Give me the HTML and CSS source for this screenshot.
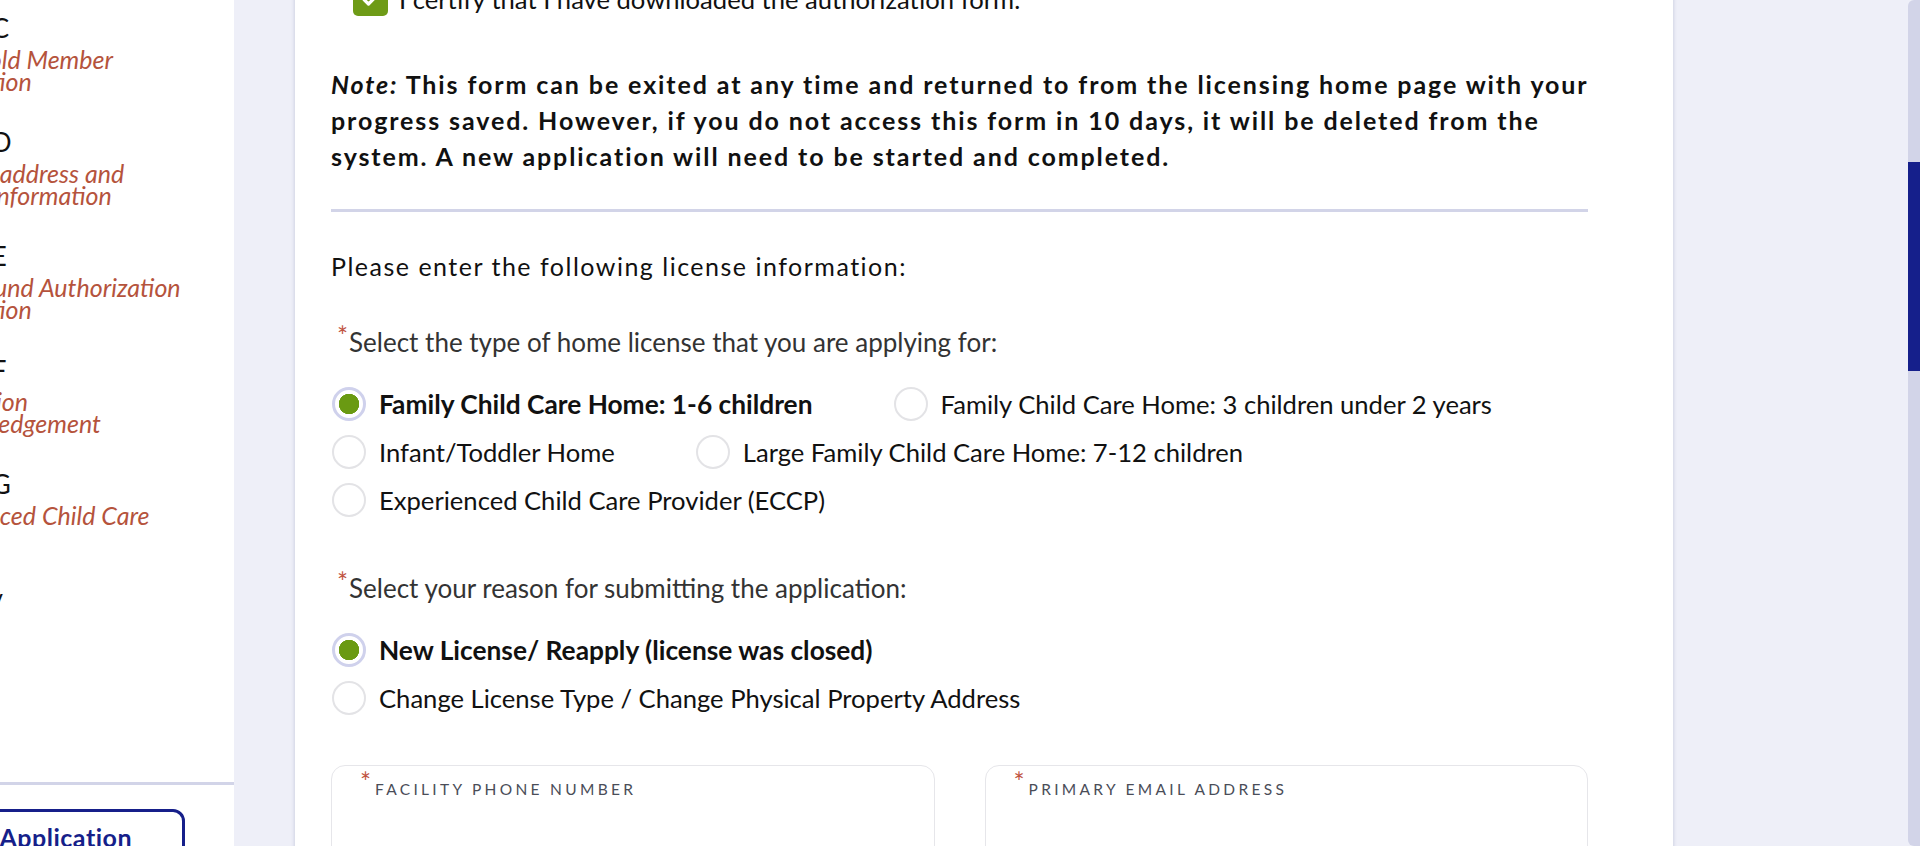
FILE: index.html
```html
<!DOCTYPE html>
<html lang="en">
<head>
<meta charset="utf-8">
<title>License Application</title>
<link rel="stylesheet" href="styles.css">
</head>
<body>
<div class="page">
  <aside class="sidebar">
    <nav class="steps">
      <div class="step">
        <div class="step-title">Step C</div>
        <div class="step-sub">Household Member<br>Information</div>
      </div>
      <div class="step">
        <div class="step-title">Step D</div>
        <div class="step-sub">Physical address and<br>mailing information</div>
      </div>
      <div class="step">
        <div class="step-title">Step E</div>
        <div class="step-sub">Background Authorization<br>Information</div>
      </div>
      <div class="step">
        <div class="step-title">Step F</div>
        <div class="step-sub">Application<br>Acknowledgement</div>
      </div>
      <div class="step">
        <div class="step-title">Step G</div>
        <div class="step-sub">Experienced Child Care</div>
      </div>
      <div class="step">
        <div class="step-title step-title-last">Summary</div>
      </div>
    </nav>
    <div class="side-foot">
      <button class="btn-outline" type="button">Save Application</button>
    </div>
  </aside>

  <main class="main">
    <section class="card">
      <div class="content">
        <div class="certify">
          <span class="checkbox">
            <svg width="22" height="22" viewBox="0 0 22 22"><path d="M4 11.5l4.5 4.5L18 6.5" fill="none" stroke="#fff" stroke-width="3.2" stroke-linecap="round" stroke-linejoin="round"/></svg>
          </span>
          <span>I certify that I have downloaded the authorization form.</span>
        </div>

        <p class="note"><em>Note:</em> This form can be exited at any time and returned to from the licensing home page with your progress saved. However, if you do not access this form in 10 days, it will be deleted from the system. A new application will need to be started and completed.</p>

        <hr class="divider">

        <p class="intro">Please enter the following license information:</p>

        <div class="question">
          <div class="q-label"><span class="req">*</span>Select the type of home license that you are applying for:</div>
          <div class="radios">
            <div class="radio-row">
              <label class="radio checked"><span class="circle"></span>Family Child Care Home: 1-6 children</label>
              <label class="radio"><span class="circle"></span>Family Child Care Home: 3 children under 2 years</label>
            </div>
            <div class="radio-row">
              <label class="radio"><span class="circle"></span>Infant/Toddler Home</label>
              <label class="radio"><span class="circle"></span>Large Family Child Care Home: 7-12 children</label>
            </div>
            <div class="radio-row">
              <label class="radio"><span class="circle"></span>Experienced Child Care Provider (ECCP)</label>
            </div>
          </div>
        </div>

        <div class="question question-2">
          <div class="q-label"><span class="req">*</span>Select your reason for submitting the application:</div>
          <div class="radios">
            <div class="radio-row">
              <label class="radio checked"><span class="circle"></span>New License/ Reapply (license was closed)</label>
            </div>
            <div class="radio-row">
              <label class="radio"><span class="circle"></span>Change License Type / Change Physical Property Address</label>
            </div>
          </div>
        </div>

        <div class="fields">
          <div class="field"><div class="field-label"><span class="req">*</span>Facility Phone Number</div></div>
          <div class="field"><div class="field-label"><span class="req">*</span>Primary Email Address</div></div>
        </div>
      </div>
    </section>
  </main>

  <div class="scrollbar"><div class="thumb"></div></div>
</div>
</body>
</html>
```

FILE: styles.css
```css
* { box-sizing: border-box; }

body {
  margin: 0;
  font-family: Lato, "Open Sans", "Liberation Sans", sans-serif;
  color: #111;
}

.page {
  display: flex;
  height: 846px;
  overflow: hidden;
  background: #eeeff8;
}

/* ---------- sidebar ---------- */
.sidebar {
  width: 234px;
  flex: none;
  background: #fff;
  display: flex;
  flex-direction: column;
  overflow: hidden;
}

.steps {
  flex: 1;
  padding-top: 12px;
}

.step {
  height: 114px;
}

.step-title {
  font-size: 26px;
  line-height: 32px;
  color: #111;
  margin-left: -66px;
  white-space: nowrap;
}

.step-title-last {
  margin-left: -104px;
}

.step-sub {
  margin-top: 4px;
  margin-left: -90px;
  font-size: 25px;
  line-height: 22px;
  font-style: italic;
  color: #b5533c;
  white-space: nowrap;
}

.side-foot {
  flex: none;
  height: 64px;
  border-top: 3px solid #d2d4e8;
  padding-top: 24px;
}

.btn-outline {
  display: block;
  width: 275px;
  height: 56px;
  margin-left: -90px;
  padding: 0 50px 0 0;
  text-align: right;
  background: #fff;
  border: 3px solid #161f8a;
  border-radius: 12px;
  color: #161f8a;
  font-family: inherit;
  font-size: 25px;
  font-weight: 700;
  line-height: 50px;
  letter-spacing: 0.5px;
  white-space: nowrap;
}

/* ---------- main ---------- */
.main {
  flex: 1;
  padding-left: 61px;
  overflow: hidden;
}

.card {
  width: 1378px;
  min-height: 900px;
  margin-top: -19px;
  padding: 0 36px;
  background: #fff;
  box-shadow: 0 0 4px rgba(20, 30, 90, 0.2);
}

.content {
  max-width: 1257px;
}

.certify {
  display: flex;
  align-items: center;
  gap: 11px;
  height: 35px;
  padding-left: 22px;
  font-size: 25.6px;
}

.checkbox {
  width: 35px;
  height: 35px;
  flex: none;
  border-radius: 5px;
  background: #6e9b17;
  display: flex;
  align-items: center;
  justify-content: center;
}

.note {
  margin: 50px -30px 0 0;
  font-size: 25px;
  font-weight: 700;
  line-height: 36px;
  letter-spacing: 1.9px;
}

.divider {
  border: 0;
  height: 3px;
  margin: 35px 0 0;
  background: #d2d4e8;
}

.intro {
  margin: 36px 0 0;
  font-size: 25px;
  line-height: 36px;
  letter-spacing: 1.5px;
}

.question {
  margin-top: 40px;
}

.question-2 {
  margin-top: 46px;
}

.q-label {
  font-size: 26px;
  line-height: 36px;
  color: #333;
}

.req {
  display: inline-block;
  color: #c0533f;
  font-size: 26px;
  line-height: 1;
  margin-left: 6px;
  margin-right: 1px;
  position: relative;
  top: -6px;
}

.radios {
  margin-top: 20px;
}

.radio-row {
  display: flex;
  align-items: center;
  gap: 80px;
  height: 48px;
}

.radio {
  display: flex;
  align-items: center;
  gap: 13px;
  font-size: 25.6px;
  color: #111;
}

.radio.checked {
  font-size: 26.3px;
  font-weight: 700;
}

.circle {
  width: 34px;
  height: 34px;
  flex: none;
  margin-left: 1px;
  border: 2px solid #e3e3e6;
  border-radius: 50%;
  background: #fff;
}

.radio.checked .circle {
  border: 3px solid #cfd1ec;
  background: radial-gradient(circle, #6a9a12 0 10px, #fff 10.5px);
}

.fields {
  display: grid;
  grid-template-columns: 1fr 1fr;
  column-gap: 50px;
  margin-top: 43px;
}

.field {
  height: 140px;
  border: 1px solid #e6e6ea;
  border-radius: 14px;
  padding: 6px 0 0 22px;
}

.field-label {
  font-size: 15.5px;
  line-height: 22px;
  letter-spacing: 3.3px;
  text-transform: uppercase;
  color: #4a4d58;
}

.field-label .req {
  font-size: 26px;
  top: -3px;
  margin-left: 6px;
  margin-right: 4px;
  letter-spacing: 0;
}

/* ---------- scrollbar ---------- */
.scrollbar {
  width: 12px;
  flex: none;
  background: #d2d4e8;
  border-radius: 6px 0 0 6px;
}

.thumb {
  margin-top: 162px;
  height: 209px;
  background: #151f8b;
}
```
